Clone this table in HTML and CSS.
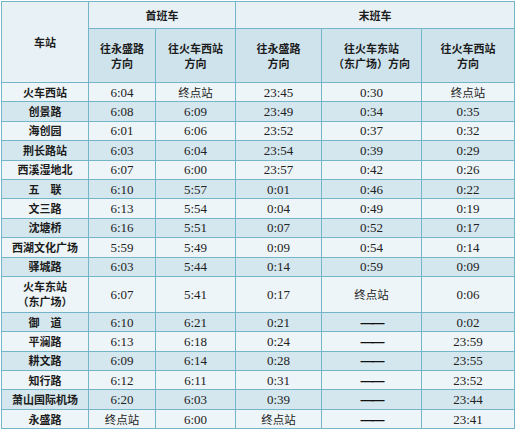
FILE: index.html
```html
<!DOCTYPE html>
<html lang="zh-CN">
<head>
<meta charset="utf-8">
<title>首末班车时刻表</title>
<link rel="stylesheet" href="styles.css">
</head>
<body>
<table class="timetable">
  <colgroup>
    <col class="c1"><col class="c2"><col class="c3"><col class="c4"><col class="c5"><col class="c6">
  </colgroup>
  <thead>
    <tr class="h1">
      <th rowspan="2" class="station-head">车站</th>
      <th colspan="2">首班车</th>
      <th colspan="3">末班车</th>
    </tr>
    <tr class="h2">
      <th>往永盛路<br>方向</th>
      <th>往火车西站<br>方向</th>
      <th>往永盛路<br>方向</th>
      <th>往火车东站<br>（东广场）方向</th>
      <th>往火车西站<br>方向</th>
    </tr>
  </thead>
  <tbody>
    <tr class="odd"><td class="st">火车西站</td><td>6:04</td><td class="cn">终点站</td><td>23:45</td><td>0:30</td><td class="cn">终点站</td></tr>
    <tr class="even"><td class="st">创景路</td><td>6:08</td><td>6:09</td><td>23:49</td><td>0:34</td><td>0:35</td></tr>
    <tr class="odd"><td class="st">海创园</td><td>6:01</td><td>6:06</td><td>23:52</td><td>0:37</td><td>0:32</td></tr>
    <tr class="even"><td class="st">荆长路站</td><td>6:03</td><td>6:04</td><td>23:54</td><td>0:39</td><td>0:29</td></tr>
    <tr class="odd"><td class="st">西溪湿地北</td><td>6:07</td><td>6:00</td><td>23:57</td><td>0:42</td><td>0:26</td></tr>
    <tr class="even"><td class="st">五　联</td><td>6:10</td><td>5:57</td><td>0:01</td><td>0:46</td><td>0:22</td></tr>
    <tr class="odd"><td class="st">文三路</td><td>6:13</td><td>5:54</td><td>0:04</td><td>0:49</td><td>0:19</td></tr>
    <tr class="even"><td class="st">沈塘桥</td><td>6:16</td><td>5:51</td><td>0:07</td><td>0:52</td><td>0:17</td></tr>
    <tr class="odd"><td class="st">西湖文化广场</td><td>5:59</td><td>5:49</td><td>0:09</td><td>0:54</td><td>0:14</td></tr>
    <tr class="even"><td class="st">驿城路</td><td>6:03</td><td>5:44</td><td>0:14</td><td>0:59</td><td>0:09</td></tr>
    <tr class="odd tall"><td class="st">火车东站<br>（东广场）</td><td>6:07</td><td>5:41</td><td>0:17</td><td class="cn">终点站</td><td>0:06</td></tr>
    <tr class="even"><td class="st">御　道</td><td>6:10</td><td>6:21</td><td>0:21</td><td class="dash">——</td><td>0:02</td></tr>
    <tr class="odd"><td class="st">平澜路</td><td>6:13</td><td>6:18</td><td>0:24</td><td class="dash">——</td><td>23:59</td></tr>
    <tr class="even"><td class="st">耕文路</td><td>6:09</td><td>6:14</td><td>0:28</td><td class="dash">——</td><td>23:55</td></tr>
    <tr class="odd"><td class="st">知行路</td><td>6:12</td><td>6:11</td><td>0:31</td><td class="dash">——</td><td>23:52</td></tr>
    <tr class="even"><td class="st">萧山国际机场</td><td>6:20</td><td>6:03</td><td>0:39</td><td class="dash">——</td><td>23:44</td></tr>
    <tr class="odd"><td class="st">永盛路</td><td class="cn">终点站</td><td>6:00</td><td class="cn">终点站</td><td class="dash">——</td><td>23:41</td></tr>
  </tbody>
</table>
</body>
</html>
```

FILE: styles.css
```css
html, body {
  margin: 0;
  padding: 0;
  background: #ffffff;
}

body {
  padding: 1px 0 0 1px;
}

.timetable {
  border-collapse: collapse;
  table-layout: fixed;
  width: 513px;
  font-family: "Liberation Serif", "Noto Sans CJK SC", serif;
  font-size: 13px;
  color: #222;
}

.c1 { width: 87px; }
.c2 { width: 67px; }
.c3 { width: 80px; }
.c4 { width: 86px; }
.c5 { width: 100px; }
.c6 { width: 93px; }

.timetable th,
.timetable td {
  border: 1px solid #74b5ca;
  text-align: center;
  vertical-align: middle;
  padding: 0;
}

.timetable th {
  font-family: "Noto Sans CJK SC", sans-serif;
  font-size: 11px;
  font-weight: 700;
  line-height: 15px;
  color: #1c1c1c;
}

.h1 th {
  height: 26px;
  background: #e8f1f5;
}

.h1 th.station-head {
  background: #e8f1f5;
}

.h2 th {
  height: 53px;
  background: #cfe3ec;
}

.timetable tbody tr {
  height: 19.4px;
}

.timetable tbody tr.tall {
  height: 36px;
}

.timetable td {
  line-height: 15px;
}

.odd td {
  background: #eef5f8;
}

.even td {
  background: #d4e6ee;
}

.timetable td.st {
  font-family: "Noto Sans CJK SC", sans-serif;
  font-size: 11px;
  font-weight: 700;
  color: #1c1c1c;
  line-height: 15px;
}

.timetable td.cn {
  font-family: "Noto Sans CJK SC", sans-serif;
  font-size: 11.5px;
  font-weight: 400;
  color: #222;
}

.timetable td.dash {
  font-family: "Liberation Sans", sans-serif;
  font-size: 13px;
  font-weight: 700;
  color: #111;
  letter-spacing: -2px;
}
```
